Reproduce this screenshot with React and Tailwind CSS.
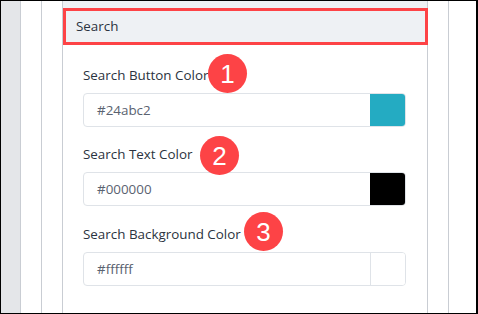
import React from 'react'

const fields = [
  { label: 'Search Button Color', value: '#24abc2', swatch: 'bg-[#24abc2]', num: 1, badge: 'left-[125px] -top-[11px]', gap: 'mt-[20px]' },
  { label: 'Search Text Color', value: '#000000', swatch: 'bg-black', num: 2, badge: 'left-[117px] -top-[8px]', gap: 'mt-[17px]' },
  { label: 'Search Background Color', value: '#ffffff', swatch: 'bg-white border-l border-[#dfe3e8]', num: 3, badge: 'left-[161px] -top-[12px]', gap: 'mt-[18px]' },
]

const Badge = ({ num, className }) => (
  <span
    className={`absolute ${className} w-[39px] h-[39px] rounded-full bg-[#fd4346] text-white flex items-center justify-center text-[26px] leading-none`}
    style={{ fontFamily: 'Arial, "Liberation Sans", sans-serif' }}
  >
    {num}
  </span>
)

const ColorField = ({ field }) => (
  <div className={field.gap}>
    <div className="relative h-[20px] leading-[20px] text-[13.4px] text-[#2b3340]">
      {field.label}
      <Badge num={field.num} className={field.badge} />
    </div>
    <div className="mt-[8px] flex h-[34px] w-[323px] border border-[#dfe3e8] rounded-[4px] overflow-hidden">
      <div className="flex-1 flex items-center pl-[13px] text-[13.4px] text-[#5a6270]">{field.value}</div>
      <div className={`w-[35px] ${field.swatch}`} />
    </div>
  </div>
)

export default function App() {
  return (
    <div
      className="w-[478px] h-[314px] bg-white border-t border-l border-b border-r-2 border-black flex overflow-hidden"
      style={{ fontFamily: '"Open Sans", "Noto Sans", sans-serif' }}
    >
      {/* sidebar strip */}
      <div className="w-[20px] bg-[#e4e6e9] border-r border-[#c9cdd3]" />
      <div className="w-[21px] border-r border-[#c9cdd3]" />
      <div className="w-[21px] border-r border-[#c9cdd3]" />

      {/* settings panel */}
      <div className="w-[365px] border-r border-[#c9cdd3]">
        <div className="bg-[#eef1f4] pt-[7px]">
          <div className="h-[37px] -mr-[1px] border-[3px] border-[#fd4346] flex items-center pl-[10px] text-[13.4px] text-[#2b3340]">
            Search
          </div>
        </div>
        <div className="pl-[20px]">
          {fields.map((f) => (
            <ColorField key={f.num} field={f} />
          ))}
        </div>
      </div>

      <div className="w-[21px] border-r border-[#c9cdd3]" />
      <div className="flex-1" />
    </div>
  )
}
